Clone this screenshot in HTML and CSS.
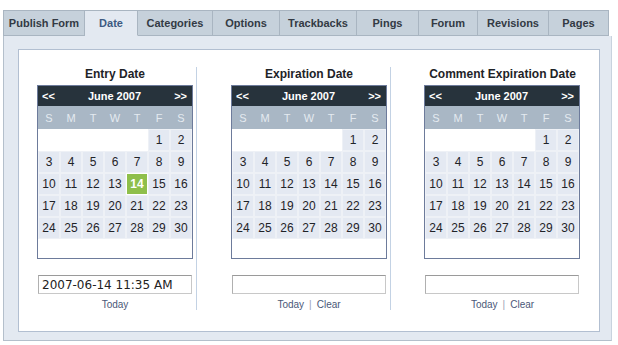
FILE: index.html
```html
<!DOCTYPE html>
<html>
<head>
<meta charset="utf-8">
<link rel="stylesheet" href="styles.css">
</head>
<body>
<div class="wrap">
  <div class="tabs">
    <div class="tab w-publish">Publish Form</div>
    <div class="tab active w-date">Date</div>
    <div class="tab w-cat">Categories</div>
    <div class="tab w-opt">Options</div>
    <div class="tab w-track">Trackbacks</div>
    <div class="tab w-pings">Pings</div>
    <div class="tab w-forum">Forum</div>
    <div class="tab w-rev">Revisions</div>
    <div class="tab w-pages">Pages</div>
  </div>
  <div class="panel">
    <div class="box">
      <div class="col">
        <div class="title">Entry Date</div>
        <div class="cal">
          <div class="cal-head"><span>&lt;&lt;</span><span>June 2007</span><span>&gt;&gt;</span></div>
          <div class="wk"><span>S</span><span>M</span><span>T</span><span>W</span><span>T</span><span>F</span><span>S</span></div>
          <div class="days">
            <span class="e"></span><span class="e"></span><span class="e"></span><span class="e"></span><span class="e"></span><span>1</span><span>2</span>
            <span>3</span><span>4</span><span>5</span><span>6</span><span>7</span><span>8</span><span>9</span>
            <span>10</span><span>11</span><span>12</span><span>13</span><span class="sel">14</span><span>15</span><span>16</span>
            <span>17</span><span>18</span><span>19</span><span>20</span><span>21</span><span>22</span><span>23</span>
            <span>24</span><span>25</span><span>26</span><span>27</span><span>28</span><span>29</span><span>30</span>
          </div>
        </div>
        <input class="field" type="text" value="2007-06-14 11:35 AM">
        <div class="links"><a>Today</a></div>
      </div>
      <div class="col">
        <div class="title">Expiration Date</div>
        <div class="cal">
          <div class="cal-head"><span>&lt;&lt;</span><span>June 2007</span><span>&gt;&gt;</span></div>
          <div class="wk"><span>S</span><span>M</span><span>T</span><span>W</span><span>T</span><span>F</span><span>S</span></div>
          <div class="days">
            <span class="e"></span><span class="e"></span><span class="e"></span><span class="e"></span><span class="e"></span><span>1</span><span>2</span>
            <span>3</span><span>4</span><span>5</span><span>6</span><span>7</span><span>8</span><span>9</span>
            <span>10</span><span>11</span><span>12</span><span>13</span><span>14</span><span>15</span><span>16</span>
            <span>17</span><span>18</span><span>19</span><span>20</span><span>21</span><span>22</span><span>23</span>
            <span>24</span><span>25</span><span>26</span><span>27</span><span>28</span><span>29</span><span>30</span>
          </div>
        </div>
        <input class="field" type="text" value="">
        <div class="links"><a>Today</a><span class="sep">|</span><a>Clear</a></div>
      </div>
      <div class="col">
        <div class="title">Comment Expiration Date</div>
        <div class="cal">
          <div class="cal-head"><span>&lt;&lt;</span><span>June 2007</span><span>&gt;&gt;</span></div>
          <div class="wk"><span>S</span><span>M</span><span>T</span><span>W</span><span>T</span><span>F</span><span>S</span></div>
          <div class="days">
            <span class="e"></span><span class="e"></span><span class="e"></span><span class="e"></span><span class="e"></span><span>1</span><span>2</span>
            <span>3</span><span>4</span><span>5</span><span>6</span><span>7</span><span>8</span><span>9</span>
            <span>10</span><span>11</span><span>12</span><span>13</span><span>14</span><span>15</span><span>16</span>
            <span>17</span><span>18</span><span>19</span><span>20</span><span>21</span><span>22</span><span>23</span>
            <span>24</span><span>25</span><span>26</span><span>27</span><span>28</span><span>29</span><span>30</span>
          </div>
        </div>
        <input class="field" type="text" value="">
        <div class="links"><a>Today</a><span class="sep">|</span><a>Clear</a></div>
      </div>
    </div>
  </div>
</div>
</body>
</html>
```

FILE: styles.css
```css
* { box-sizing: border-box; }
body {
  margin: 0;
  background: #ffffff;
  font-family: "Liberation Sans", Arial, sans-serif;
}
.wrap {
  padding: 10px 0 0 3px;
  width: 612px;
}
.tabs {
  display: flex;
  height: 26px;
}
.tab {
  height: 26px;
  background: #c6d1db;
  border-top: 1px solid #a9b5c1;
  border-right: 1px solid #a9b5c1;
  border-bottom: 1px solid #a9b5c1;
  color: #333a44;
  font-size: 11px;
  font-weight: bold;
  display: flex;
  align-items: center;
  justify-content: center;
}
.tab:first-child { border-left: 1px solid #a9b5c1; }
.tab.active {
  background: #e3e9f1;
  border-bottom-color: #e3e9f1;
  color: #3d5a82;
}
.w-publish { width: 82px; }
.w-date { width: 53px; }
.w-cat { width: 75px; }
.w-opt { width: 67px; }
.w-track { width: 77px; }
.w-pings { width: 62px; }
.w-forum { width: 59px; }
.w-rev { width: 71px; }
.w-pages { width: 60px; }

.panel {
  background: #e3e9f1;
  border-left: 1px solid #b4bfcb;
  border-right: 1px solid #c9d3de;
  border-bottom: 1px solid #b4bfcb;
  padding: 13px 11px 8px 14px;
  height: 305px;
}
.box {
  background: #ffffff;
  border: 1px solid #b2bfd1;
  height: 283px;
  padding: 17px 0 0 18px;
  display: flex;
  align-items: flex-start;
}
.col {
  width: 160px;
  padding-right: 3px;
  border-right: 1px solid #c3d2e4;
  height: 243px;
}
.col + .col { margin-left: 34px; }
.col:last-child { border-right: none; margin-left: 33px; }
.title {
  height: 18px;
  line-height: 15px;
  text-align: center;
  font-size: 12px;
  font-weight: bold;
  color: #1e2328;
}
.cal {
  width: 156px;
  height: 174px;
  border: 1px solid #6d7b9b;
  background: #ffffff;
}
.cal-head {
  height: 20px;
  background: #27333c;
  color: #ffffff;
  font-size: 11px;
  font-weight: bold;
  display: flex;
  justify-content: space-between;
  align-items: center;
  padding: 0 5px 0 4px;
}
.wk {
  height: 23px;
  background: #a9b7c5;
  display: grid;
  grid-template-columns: repeat(7, 22px);
  align-items: center;
}
.wk span {
  text-align: center;
  color: #e4eaf0;
  font-size: 11px;
}
.days {
  display: grid;
  grid-template-columns: repeat(7, 22px);
  grid-auto-rows: 22px;
}
.days span {
  background: #e4e9f2;
  border: 1px solid #eef1f6;
  display: flex;
  align-items: center;
  justify-content: center;
  font-size: 12px;
  color: #1f2328;
}
.days span.e {
  background: #ffffff;
  border-color: #ffffff;
}
.days span.sel {
  background: #8fbf4b;
  border: 1px solid #ffffff;
  color: #ffffff;
  font-weight: bold;
}
.field {
  display: block;
  margin: 16px 0 0 1px;
  width: 154px;
  height: 19px;
  border: 1px solid #c8c8c8;
  border-top-color: #9a9a9a;
  border-left-color: #b0b0b0;
  padding: 0 0 0 3px;
  font-family: "DejaVu Sans", Verdana, sans-serif;
  font-size: 12px;
  color: #222222;
  background: #ffffff;
  outline: none;
}
.links {
  margin-top: 4px;
  text-align: center;
  font-size: 10px;
  line-height: 14px;
  color: #4b5878;
}
.links a { color: #4b5878; }
.sep {
  color: #9aa3b3;
  margin: 0 5px;
}
```
